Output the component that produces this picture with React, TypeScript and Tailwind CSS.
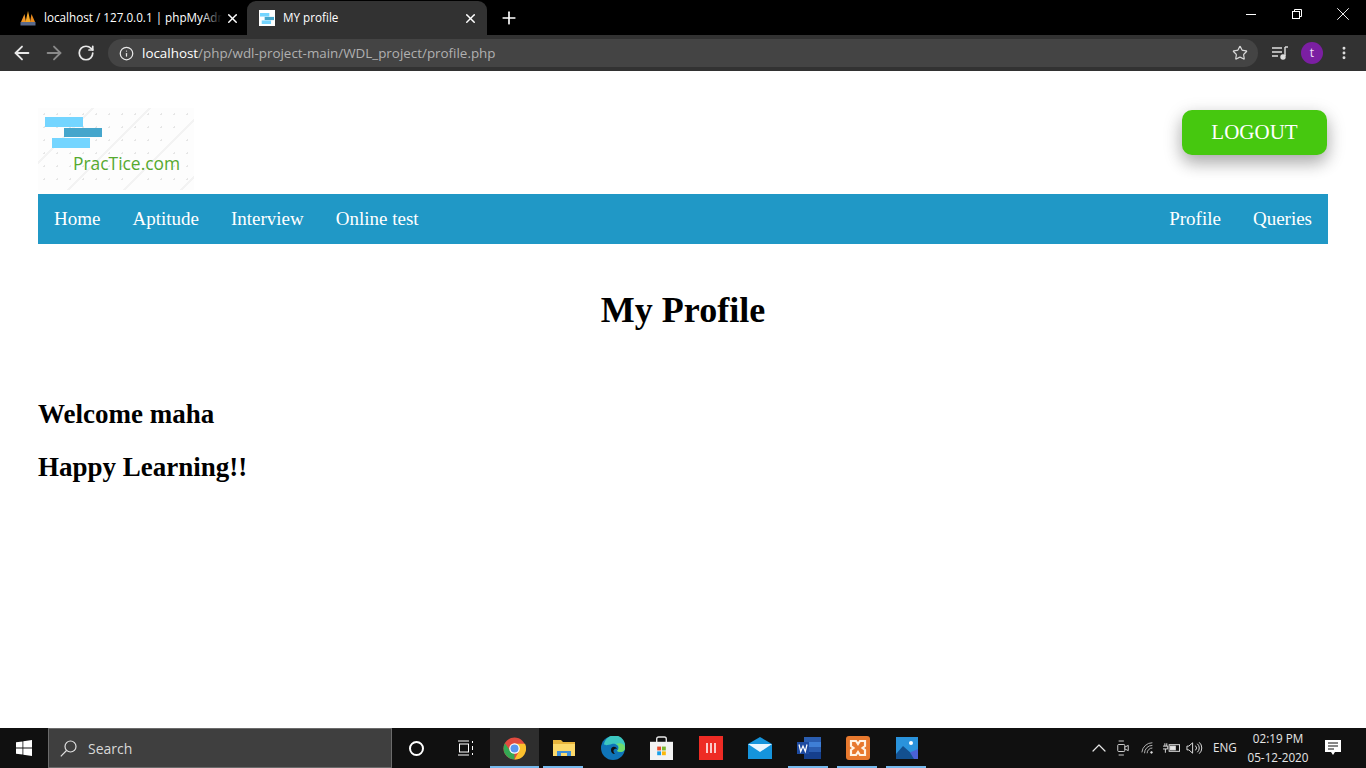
import { ReactNode } from 'react';
import { ArrowLeft, ArrowRight, RotateCw, Info, Star, X, Plus, MoreVertical, ChevronUp } from 'lucide-react';

// small 3-bar logo used by tab favicon and page logo
function Bars({ className }: { className?: string }) {
  return (
    <svg viewBox="0 0 57 31" preserveAspectRatio="none" className={className}>
      <rect x="0" y="0" width="38" height="10" fill="#74d5ff" />
      <rect x="19" y="11" width="38" height="9" fill="#45a6cc" />
      <rect x="7" y="21" width="38" height="10" fill="#74d5ff" />
    </svg>
  );
}

function PmaIcon() {
  return (
    <svg viewBox="0 0 16 16" className="w-4 h-4">
      <path d="M1 12 L4.5 4 L6 12 Z" fill="#f0962a" />
      <path d="M5.5 12 L8 1 L10.5 12 Z" fill="#f5a623" />
      <path d="M10 12 L11.5 4 L15 12 Z" fill="#e98a1c" />
      <rect x="0.5" y="12" width="15" height="3.5" fill="#5a6a8c" />
    </svg>
  );
}

function Logo() {
  return (
    <div className="relative w-[156px] h-[82px] bg-[#fdfdfd] bg-[radial-gradient(#e6e6e6_1px,transparent_1px)] bg-[length:13px_13px]">
      <div className="absolute inset-0 bg-[repeating-linear-gradient(135deg,transparent_0,transparent_38px,#f3f3f3_38px,#f3f3f3_40px)]" />
      <Bars className="absolute left-[7px] top-[9px] w-[57px] h-[31px]" />
      <span className="absolute left-[35px] top-[44px] text-[17.4px] leading-[22px] text-[#55a92f] font-['Open_Sans',sans-serif]">PracTice.com</span>
    </div>
  );
}

function ChromeBar() {
  return (
    <div className="font-['Open_Sans',sans-serif]">
      <div className="h-[35px] bg-black flex items-end pl-2 text-white text-[11.7px]">
        <div className="w-[239px] h-[34px] flex items-center pl-[12px]">
          <PmaIcon />
          <div className="relative ml-[8px] w-[178px] overflow-hidden whitespace-nowrap">
            localhost / 127.0.0.1 | phpMyAdm
            <div className="absolute inset-y-0 right-0 w-5 bg-gradient-to-r from-transparent to-black" />
          </div>
          <X size={15} strokeWidth={2.4} className="ml-[3px] text-white" />
        </div>
        <div className="w-[240px] h-[34px] bg-[#323232] rounded-t-[9px] flex items-center pl-[12px] pr-[9px]">
          <div className="w-4 h-4 bg-white flex items-center justify-center">
            <Bars className="w-[14px] h-[11px]" />
          </div>
          <span className="ml-[8px] flex-1">MY profile</span>
          <X size={15} strokeWidth={2.4} className="text-white" />
        </div>
        <div className="h-[34px] flex items-center ml-[12px]">
          <Plus size={20} strokeWidth={2} />
        </div>
        <div className="ml-auto h-[35px] flex items-start text-white">
          <div className="w-[46px] h-[28px] flex items-center justify-center">
            <div className="w-[10px] h-[1px] bg-white" />
          </div>
          <div className="w-[46px] h-[28px] flex items-center justify-center">
            <svg viewBox="0 0 10 10" className="w-[10px] h-[10px]" fill="none" stroke="white" strokeWidth="1">
              <rect x="0.5" y="2.5" width="7" height="7" />
              <path d="M2.5 2.5V0.5H9.5V7.5H7.5" />
            </svg>
          </div>
          <div className="w-[46px] h-[28px] flex items-center justify-center">
            <X size={22} strokeWidth={1} />
          </div>
        </div>
      </div>
      <div className="h-[36px] bg-[#323232] flex items-center pl-[11px]">
        <ArrowLeft size={22} strokeWidth={2} className="text-[#e8e8e8]" />
        <ArrowRight size={22} strokeWidth={2} className="ml-[10px] text-[#8a8a8a]" />
        <RotateCw size={18} strokeWidth={2.3} className="ml-[12px] text-[#e8e8e8]" />
        <div className="ml-[13px] w-[1150px] h-[28px] rounded-full bg-[#444444] flex items-center pl-[11px] pr-[10px]">
          <Info size={15} className="text-[#e8e8e8]" />
          <span className="ml-[8px] text-[13.4px] text-[#b0b0b0]">
            <span className="text-white font-medium">localhost</span>/php/wdl-project-main/WDL_project/profile.php
          </span>
          <Star size={16} strokeWidth={1.8} className="ml-auto text-[#d8d8d8]" />
        </div>
        <svg viewBox="0 0 16 14" className="ml-[14px] w-4 h-[14px]" fill="none" stroke="#e0e0e0" strokeWidth="1.4">
          <path d="M0 2H10M0 6H10M0 10H6" />
          <path d="M13 1V10" />
          <circle cx="11" cy="11" r="2" fill="#e0e0e0" />
          <path d="M13 1H16" />
        </svg>
        <div className="ml-[13px] w-[22px] h-[22px] rounded-full bg-[#7b1fa2] text-[#f0e0f8] text-[12px] flex items-center justify-center">t</div>
        <MoreVertical size={16} strokeWidth={2.4} className="ml-[13px] text-[#e0e0e0]" />
      </div>
    </div>
  );
}

function NavLink({ children }: { children: ReactNode }) {
  return <a className="px-4 text-white text-[19px] leading-[50px]">{children}</a>;
}

function Page() {
  return (
    <div className="flex-1 bg-white font-['Liberation_Serif',serif] text-black px-[38px] pt-[37px]">
      <div className="flex justify-between h-[86px]">
        <Logo />
        <button className="mt-[2px] mr-[1px] w-[145px] h-[45px] rounded-[10px] bg-[#46c80f] text-white text-[21px] shadow-[0_8px_16px_0_rgba(0,0,0,0.2),0_6px_20px_0_rgba(0,0,0,0.19)]">LOGOUT</button>
      </div>
      <nav className="h-[50px] bg-[#2098c6] flex">
        <NavLink>Home</NavLink>
        <NavLink>Aptitude</NavLink>
        <NavLink>Interview</NavLink>
        <NavLink>Online test</NavLink>
        <div className="ml-auto flex">
          <NavLink>Profile</NavLink>
          <NavLink>Queries</NavLink>
        </div>
      </nav>
      <h1 className="mt-[45px] text-center text-[36px] leading-[42px] font-bold">My Profile</h1>
      <h2 className="mt-[68px] text-[27px] leading-[30px] font-bold">Welcome maha</h2>
      <h2 className="mt-[23px] text-[27px] leading-[30px] font-bold">Happy Learning!!</h2>
    </div>
  );
}

function TaskSlot({ children, on, active }: { children: ReactNode; on?: boolean; active?: boolean }) {
  return (
    <div className={`relative h-10 w-[49px] flex items-center justify-center ${active ? 'bg-[#2e2e2e]' : ''}`}>
      {children}
      {on && <div className={`absolute bottom-0 h-[2px] bg-[#76b9ed] ${active ? 'left-0 right-0' : 'left-[4px] right-[5px]'}`} />}
    </div>
  );
}

function Taskbar() {
  return (
    <div className="h-10 bg-[#101010] flex items-center text-white font-['Open_Sans',sans-serif]">
      <div className="w-[48px] flex justify-center">
        <svg viewBox="0 0 16 16" className="w-4 h-4" fill="white">
          <path d="M0 2.3L6.5 1.4V7.6H0ZM7.3 1.3L16 0V7.6H7.3ZM0 8.4H6.5V14.6L0 13.7ZM7.3 8.4H16V16L7.3 14.7Z" />
        </svg>
      </div>
      <div className="w-[344px] h-[40px] bg-[#3f3f3f] border border-[#6b6b6b] flex items-center pl-[11px] text-[14px] text-[#d8d8d8]">
        <svg viewBox="0 0 17 17" className="w-[17px] h-[17px]" fill="none" stroke="#e0e0e0" strokeWidth="1.2">
          <circle cx="10.5" cy="6.5" r="5.5" />
          <path d="M6.5 10.5L0.8 16.3" />
        </svg>
        <span className="ml-[11px]">Search</span>
      </div>
      <div className="w-[49px] flex justify-center">
        <div className="w-[15px] h-[15px] rounded-full border-2 border-white" />
      </div>
      <div className="w-[49px] flex justify-center">
        <svg viewBox="0 0 16 16" className="w-4 h-4" fill="none" stroke="white" strokeWidth="1">
          <path d="M0 1H11M0 15H11" />
          <rect x="1.5" y="4" width="9" height="8" />
          <path d="M14.5 1V3M14.5 13V15M14.5 6V10" />
        </svg>
      </div>
      <TaskSlot on active>
        <svg viewBox="0 0 24 24" className="w-[23px] h-[23px]">
          <circle cx="12" cy="12" r="11.5" fill="#e04a3f" />
          <path d="M12 23.5A11.5 11.5 0 0 1 2 6.5L8 15L12 17Z" fill="#34a853" />
          <path d="M12 23.5L17 14L12 7H23A11.5 11.5 0 0 1 12 23.5Z" fill="#fbc02d" />
          <circle cx="12" cy="12" r="5.5" fill="white" />
          <circle cx="12" cy="12" r="4.2" fill="#5a95ee" />
        </svg>
      </TaskSlot>
      <TaskSlot on>
        <svg viewBox="0 0 22 20" className="w-[22px] h-5">
          <path d="M0 2H8L10 4H22V18H0Z" fill="#e8b53c" />
          <path d="M0 6H22V18H0Z" fill="#fcd96a" />
          <path d="M4 13H18V18H14V15H8V18H4Z" fill="#3f8fd8" />
        </svg>
      </TaskSlot>
      <TaskSlot>
        <svg viewBox="0 0 24 24" className="w-6 h-6">
          <circle cx="12" cy="12" r="12" fill="#0f74b8" />
          <path d="M3 8A10 10 0 0 1 24 12C24 16 19 17 16 15C20 11 15 7 11 8C7 9 4 10 3 8Z" fill="#3cc7c0" />
          <path d="M24 12C24 16 19 17 16 15C19 12 18 9 15 8C19 6 24 8 24 12Z" fill="#6fdc6b" />
          <path d="M10 14C10 10 15 10 16 13C13 12 11 15 14 18C11 18 10 16 10 14Z" fill="#111" />
        </svg>
      </TaskSlot>
      <TaskSlot>
        <svg viewBox="0 0 24 26" className="w-[23px] h-[25px]">
          <path d="M7 7V3A2 2 0 0 1 9 1H15A2 2 0 0 1 17 3V7" fill="none" stroke="#e8e8e8" strokeWidth="1.4" />
          <rect x="0" y="6" width="24" height="19" fill="#f3f3f3" />
          <rect x="7.5" y="11" width="4" height="4" fill="#e74c2c" />
          <rect x="12.5" y="11" width="4" height="4" fill="#7cb82f" />
          <rect x="7.5" y="16" width="4" height="4" fill="#1aa0e8" />
          <rect x="12.5" y="16" width="4" height="4" fill="#fbb90a" />
        </svg>
      </TaskSlot>
      <TaskSlot>
        <svg viewBox="0 0 24 24" className="w-6 h-6">
          <rect width="24" height="24" fill="#ee2b24" />
          <path d="M8 7V17M12 7V17M16 7V17" stroke="white" strokeWidth="1.5" />
        </svg>
      </TaskSlot>
      <TaskSlot>
        <svg viewBox="0 0 24 22" className="w-6 h-[22px]">
          <path d="M0 7L12 0L24 7V22H0Z" fill="#1594dc" />
          <path d="M0 7H24L12 15Z" fill="#e8f6ff" />
        </svg>
      </TaskSlot>
      <TaskSlot on>
        <svg viewBox="0 0 24 22" className="w-6 h-[22px]">
          <rect x="7" y="0" width="17" height="22" fill="#2a5db0" />
          <rect x="7" y="5" width="17" height="5" fill="#3f7fd6" />
          <rect x="7" y="15" width="17" height="7" fill="#153f8c" />
          <rect x="0" y="5" width="12" height="12" fill="#1d4aa0" />
          <path d="M2 7.5L3.7 14.5L6 9L8.3 14.5L10 7.5" fill="none" stroke="white" strokeWidth="1.2" />
        </svg>
      </TaskSlot>
      <TaskSlot on>
        <svg viewBox="0 0 24 24" className="w-6 h-6">
          <rect width="24" height="24" rx="3" fill="#e8792e" />
          <path d="M5 5H10L12 8L14 5H19V10L16.5 12L19 14V19H14L12 16L10 19H5V14L7.5 12L5 10Z" fill="none" stroke="#fff3e4" strokeWidth="2.2" />
        </svg>
      </TaskSlot>
      <TaskSlot on>
        <svg viewBox="0 0 22 22" className="w-[22px] h-[22px]">
          <rect width="22" height="22" fill="#2a93dc" />
          <circle cx="15" cy="6" r="2" fill="white" />
          <path d="M0 17L7 9L16 17L22 13V22H0Z" fill="#13508f" />
          <path d="M14 15.5L22 12V22H18Z" fill="#4a62d8" />
        </svg>
      </TaskSlot>

      <div className="ml-auto flex items-center text-[#e6e6e6]">
        <ChevronUp size={24} strokeWidth={1.2} />
        <svg viewBox="0 0 16 20" className="ml-[5px] w-[14px] h-[18px]" fill="none" stroke="#e6e6e6" strokeWidth="1">
          <rect x="2" y="6" width="8" height="8" rx="1" />
          <path d="M10 9L14 7V13L10 11M3 2H9M3 18H9" />
        </svg>
        <svg viewBox="0 0 16 16" className="ml-[11px] w-[14px] h-[14px]" fill="none" stroke="#c8c8c8" strokeWidth="1">
          <path d="M1 13A12 12 0 0 1 13 2M4 14A9 9 0 0 1 13 5M7 14A6 6 0 0 1 13 8" />
          <circle cx="12" cy="13" r="1" fill="#e6e6e6" />
        </svg>
        <svg viewBox="0 0 18 14" className="ml-[8px] w-[17px] h-[14px]" fill="none" stroke="#e6e6e6" strokeWidth="1">
          <rect x="6.5" y="3.5" width="11" height="7" />
          <rect x="8" y="5" width="5" height="4" fill="#e6e6e6" />
          <path d="M0 5H5V8H0M2 2V5M4 2V5M2.5 8V12" />
        </svg>
        <svg viewBox="0 0 18 14" className="ml-[6px] w-[17px] h-[14px]" fill="none" stroke="#e6e6e6" strokeWidth="1">
          <path d="M1 5H3L7 1.5V12.5L3 9H1Z" />
          <path d="M10 4.5A3.5 3.5 0 0 1 10 9.5M12 2.5A6 6 0 0 1 12 11.5M14 1A8 8 0 0 1 14 13" />
        </svg>
        <span className="ml-[10px] w-[23px] text-[11.7px] whitespace-nowrap">ENG</span>
        <div className="ml-[7px] w-[70px] text-center text-[11.7px] leading-[19px] whitespace-nowrap">
          <div>02:19 PM</div>
          <div>05-12-2020</div>
        </div>
        <div className="w-[40px] flex justify-center mr-[13px]">
          <svg viewBox="0 0 16 16" className="w-4 h-4" fill="white">
            <path d="M0 0H16V12H10L8 15L6 12H0Z" />
            <path d="M3 3H13M3 6H13M3 9H9" stroke="#101010" strokeWidth="1" />
          </svg>
        </div>
      </div>
    </div>
  );
}

export default function App() {
  return (
    <div className="w-[1366px] h-[768px] flex flex-col overflow-hidden">
      <ChromeBar />
      <Page />
      <Taskbar />
    </div>
  );
}
